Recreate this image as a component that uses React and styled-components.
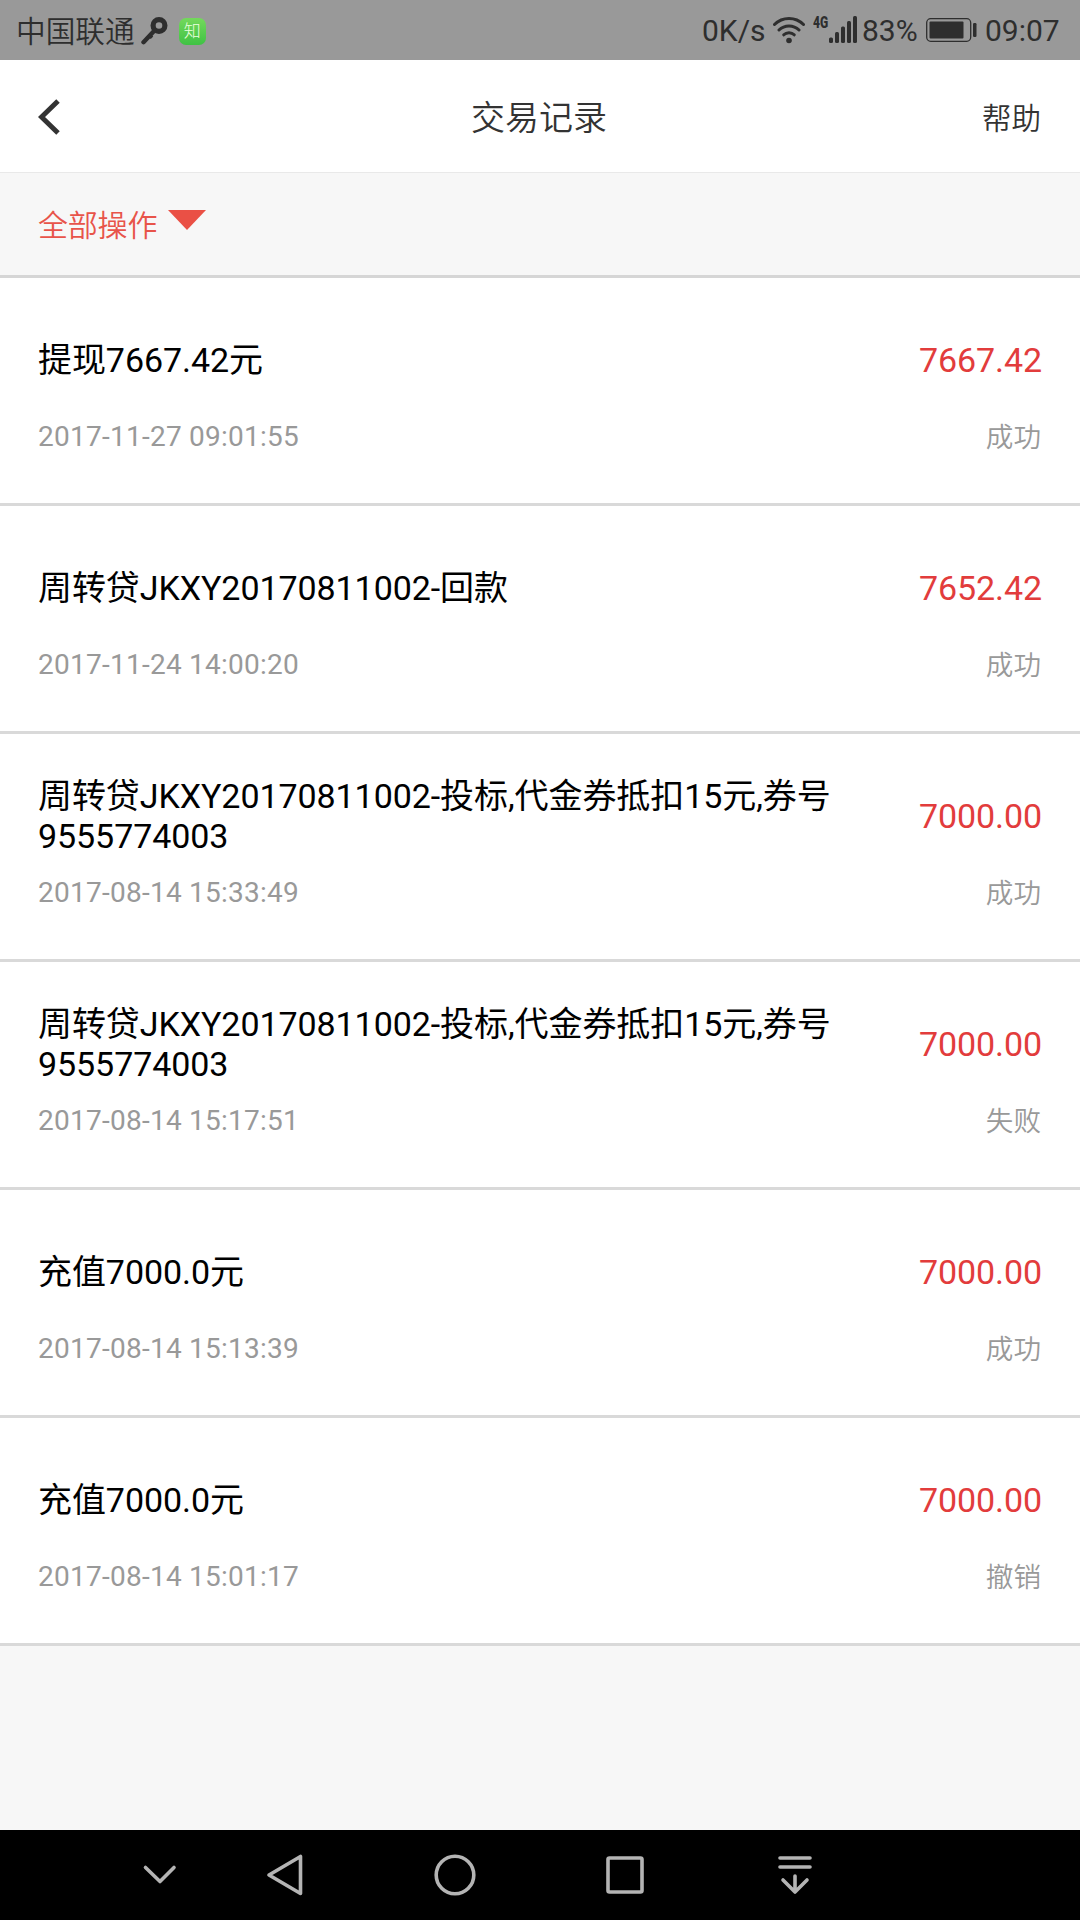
import React from "react";
import styled, { createGlobalStyle } from "styled-components";

const GlobalStyle = createGlobalStyle`
  * { box-sizing: border-box; }
  body {
    margin: 0;
    background: #f7f7f7;
    font-family: Roboto, "Noto Sans CJK SC", sans-serif;
  }
  svg { display: block; flex: none; }
`;

const Screen = styled.div`
  width: 1080px;
  height: 1920px;
  display: flex;
  flex-direction: column;
  background: #f7f7f7;
  overflow: hidden;
`;

const StatusBar = styled.div`
  flex: none;
  height: 60px;
  padding: 0 20px 0 16px;
  display: flex;
  align-items: center;
  justify-content: space-between;
  background: #999;
  color: #2e2e2e;
  font-size: 30px;
  line-height: 60px;
  white-space: nowrap;
`;

const StatusGroup = styled.div`
  display: flex;
  align-items: center;
`;

const Carrier = styled.span`
  font-weight: 350;
  font-size: 29.7px;
  margin-right: 5px;
  height: 60px;
  line-height: 63px;
`;

const AppBadge = styled.span`
  width: 27px;
  height: 27px;
  margin: 2px 0 0 10px;
  border-radius: 7px;
  background: linear-gradient(#74d95c, #3fc244);
  color: #eaffdf;
  font-size: 17px;
  font-weight: 300;
  line-height: 27px;
  text-align: center;
`;

const StatusText = styled.span`
  font-size: 30px;
  width: ${(p) => p.$width}px;
  margin-left: ${(p) => p.$gap || 0}px;
  height: 60px;
  line-height: 61px;
`;

const NetworkType = styled.span`
  width: 16px;
  margin-left: 8px;
  align-self: flex-start;
  padding-top: 14px;
  font-size: 16px;
  line-height: 17px;
  font-weight: 900;
  transform: scaleX(0.75);
  transform-origin: left;
`;

const Header = styled.header`
  flex: none;
  height: 113px;
  padding: 2px 38px 0;
  display: grid;
  grid-template-columns: 1fr auto 1fr;
  align-items: center;
  background: #fff;
  border-bottom: 1px solid #e9e9e9;
  color: #333;
`;

const Title = styled.h1`
  margin: 2px 2px 0 0;
  font-size: 34px;
  font-weight: 350;
  line-height: 50px;
`;

const Help = styled.span`
  justify-self: end;
  margin: 3px 1px 0 0;
  font-size: 29.5px;
  font-weight: 350;
  line-height: 44px;
`;

const FilterBar = styled.div`
  flex: none;
  height: 105px;
  padding: 3px 38px 0;
  display: flex;
  align-items: center;
  border-bottom: 3px solid #d6d6d6;
  color: #e8544a;
  font-size: 30px;
  line-height: 44px;
  font-weight: 350;
`;

const FilterLabel = styled.span`
  margin-top: 1px;
  letter-spacing: -0.2px;
`;

const Caret = styled.svg`
  margin: 0 0 12px 11px;
`;

const Row = styled.article`
  flex: none;
  height: 228px;
  padding: 40px 38px 0;
  display: grid;
  grid-template-columns: 820px 1fr;
  grid-template-rows: 84px 34px;
  row-gap: 18px;
  align-items: center;
  background: #fff;
  border-bottom: 3px solid #d9d9d9;
`;

const RowTitle = styled.div`
  font-size: 34px;
  letter-spacing: -0.07px;
  line-height: 40px;
  color: #000;
`;

const Amount = styled.div`
  justify-self: end;
  font-size: 34px;
  letter-spacing: -0.1px;
  line-height: 40px;
  color: #e23c3c;
`;

const Time = styled.div`
  font-size: 28px;
  letter-spacing: 0.25px;
  line-height: 34px;
  color: #999;
`;

const State = styled.div`
  justify-self: end;
  margin: 2px 1px 0 0;
  font-size: 27.6px;
  font-weight: 350;
  line-height: 34px;
  color: #999;
`;

const NavBar = styled.nav`
  flex: none;
  height: 90px;
  margin-top: auto;
  padding-left: 120px;
  display: grid;
  grid-template-columns: 80px 170px 170px 170px 170px;
  align-items: center;
  justify-items: center;
  background: #000;
`;

const NavIcon = styled.svg`
  fill: none;
  stroke: #b4b4b4;
  stroke-width: 3.6;
  stroke-linecap: round;
  stroke-linejoin: round;
`;

const WifiIcon = styled.svg`
  margin-left: 5px;
`;

const BatteryIcon = styled.svg`
  margin-left: 8px;
`;

const records = [
  { title: "提现7667.42元", time: "2017-11-27 09:01:55", amount: "7667.42", state: "成功" },
  { title: "周转贷JKXY20170811002-回款", time: "2017-11-24 14:00:20", amount: "7652.42", state: "成功" },
  { title: "周转贷JKXY20170811002-投标,代金券抵扣15元,券号9555774003", time: "2017-08-14 15:33:49", amount: "7000.00", state: "成功" },
  { title: "周转贷JKXY20170811002-投标,代金券抵扣15元,券号9555774003", time: "2017-08-14 15:17:51", amount: "7000.00", state: "失败" },
  { title: "充值7000.0元", time: "2017-08-14 15:13:39", amount: "7000.00", state: "成功" },
  { title: "充值7000.0元", time: "2017-08-14 15:01:17", amount: "7000.00", state: "撤销" },
];

const navIcons = [
  <path key="hide" d="M15.5 22.5 30 36.5 44 22.5" />,
  <path key="back" d="M14 30 45.5 11.5V48.5Z" />,
  <circle key="home" cx="30" cy="30" r="18.8" />,
  <rect key="recent" x="13" y="13" width="34" height="34" rx="1.5" />,
  <path key="shade" d="M15 13H45M15 22H45M30 31V46M18 35 30 47 42 35" />,
];

export default function App() {
  return (
    <Screen>
      <GlobalStyle />
      <StatusBar>
        <StatusGroup>
          <Carrier>中国联通</Carrier>
          <svg width="29" height="30" viewBox="0 0 29 30" fill="none" stroke="#2e2e2e">
            <circle cx="19" cy="10.5" r="5.9" strokeWidth="5.2" />
            <path d="M14.5 15.5 3.5 27.2" strokeWidth="4.4" strokeLinecap="round" />
            <path d="M9.5 20.5 12 22.8" strokeWidth="3.6" />
          </svg>
          <AppBadge>知</AppBadge>
        </StatusGroup>
        <StatusGroup>
          <StatusText $width={66}>0K/s</StatusText>
          <WifiIcon width="32" height="28" viewBox="0 0 32 28" fill="none" stroke="#2e2e2e" strokeWidth="3" strokeLinecap="round">
            <path d="M1.5 8.5C9.5.5 22.5.5 30.5 8.5M6 14C11.5 8.5 20.5 8.5 26 14M10.8 18.8C13.5 16 18.5 16 21.2 18.8" />
            <circle cx="16" cy="24.5" r="2.8" fill="#2e2e2e" stroke="none" />
          </WifiIcon>
          <NetworkType>4G</NetworkType>
          <svg width="28" height="28" viewBox="0 0 28 28" fill="#2e2e2e">
            <rect x="0" y="21.5" width="4" height="5.5" rx="1.5" />
            <rect x="6" y="16" width="4" height="11" rx="1.5" />
            <rect x="12" y="10.5" width="4" height="16.5" rx="1.5" />
            <rect x="18" y="5" width="4" height="22" rx="1.5" />
            <rect x="24" y="0" width="4" height="27" rx="1.5" />
          </svg>
          <StatusText $width={56} $gap={5}>83%</StatusText>
          <BatteryIcon width="51" height="24" viewBox="0 0 51 24" fill="#2e2e2e">
            <rect x="0.7" y="0.7" width="44" height="22.6" rx="4" fill="none" stroke="#2e2e2e" strokeWidth="1.3" />
            <rect x="3.5" y="3.5" width="34" height="17" rx="1" />
            <rect x="47" y="5" width="3.5" height="14" rx="1.2" />
          </BatteryIcon>
          <StatusText $width={75} $gap={8}>09:07</StatusText>
        </StatusGroup>
      </StatusBar>

      <Header>
        <svg width="22" height="36" viewBox="0 0 22 36" fill="none" stroke="#333" strokeWidth="5">
          <path d="M20 2 3.5 18 20 34" />
        </svg>
        <Title>交易记录</Title>
        <Help>帮助</Help>
      </Header>

      <FilterBar>
        <FilterLabel>全部操作</FilterLabel>
        <Caret width="38" height="20" viewBox="0 0 38 20">
          <path d="M0 0H38L19 20Z" fill="#ea5045" />
        </Caret>
      </FilterBar>

      {records.map((r) => (
        <Row key={r.time}>
          <RowTitle>{r.title}</RowTitle>
          <Amount>{r.amount}</Amount>
          <Time>{r.time}</Time>
          <State>{r.state}</State>
        </Row>
      ))}

      <NavBar>
        {navIcons.map((icon) => (
          <NavIcon key={icon.key} width="60" height="60" viewBox="0 0 60 60">
            {icon}
          </NavIcon>
        ))}
      </NavBar>
    </Screen>
  );
}
